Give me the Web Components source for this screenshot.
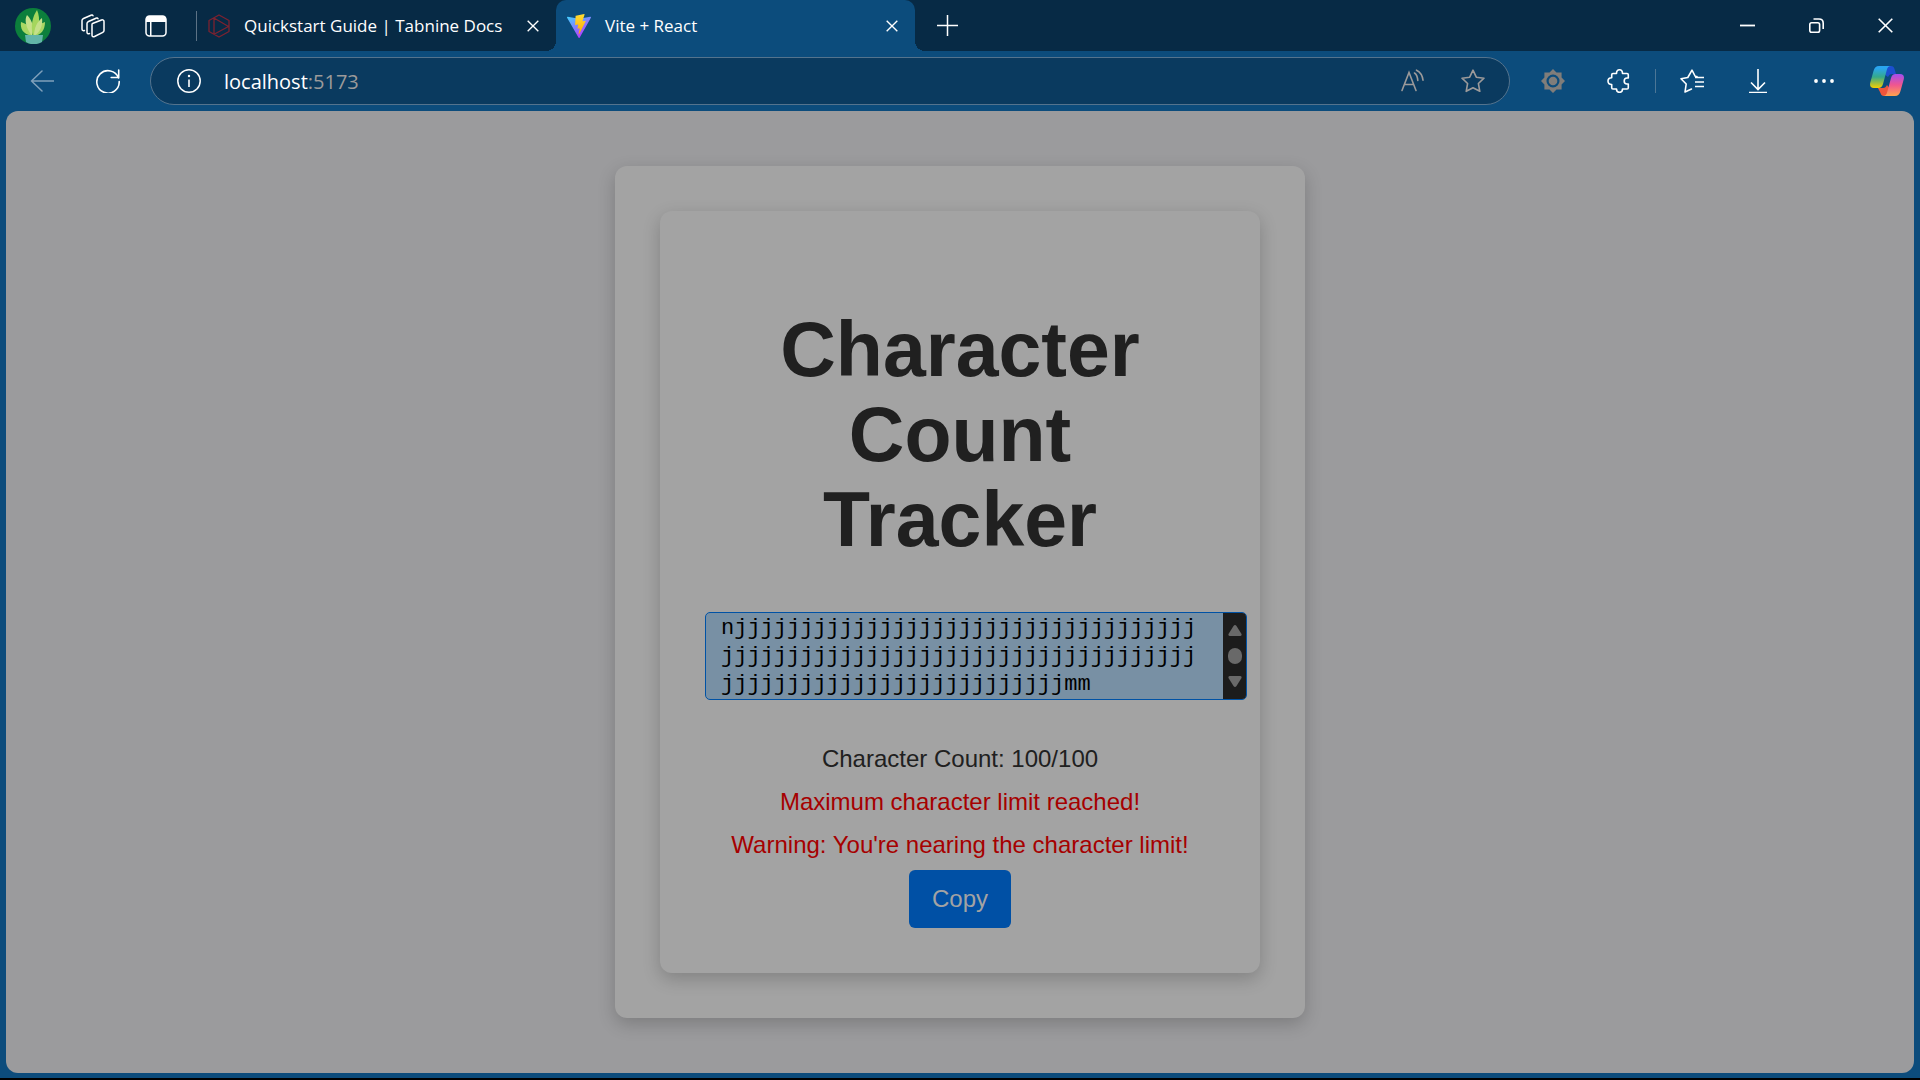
<!DOCTYPE html>
<html lang="en">
<head>
<meta charset="utf-8">
<title>Vite + React</title>
<style>
html, body { margin: 0; height: 100%; background: #000; }
body { font-family: "Open Sans", "Noto Sans", sans-serif; }
</style>
</head>
<body>
<browser-window>
  <tab-strip slot="tabs"></tab-strip>
  <tool-bar slot="toolbar"></tool-bar>
  <shadow-card>
    <shadow-card>
      <character-counter limit="100"></character-counter>
    </shadow-card>
  </shadow-card>
</browser-window>
<script>
const define = (name, html, setup) => customElements.define(name, class extends HTMLElement {
  connectedCallback() {
    if (this.shadowRoot) return;
    const t = document.createElement('template');
    t.innerHTML = html;
    this.attachShadow({ mode: 'open' }).append(t.content.cloneNode(true));
    if (setup) setup(this);
  }
});

const icons = {
  avatar: `<circle cx="18" cy="18" r="18" fill="#0c7f3c"/><g fill="#a9d764"><path d="M17 28C8 26 5 21 6 14c7 2 11 7 11 14z"/><path d="M19 28c0-7 4-12 11-14 0 8-4 13-11 14z"/><path fill="#c5e08a" d="M17 28C11 20 9 12 12 7c6 6 7 13 5 21z"/><path fill="#a5d65d" d="M18 28C15 17 18 8 22 2c4 9 2 19-4 26z"/><path fill="#c5e08a" d="M19 28c0-8 3-14 8-18 1 8-2 14-8 18z"/></g><path fill="#62b5a8" d="M10 27h18l-1 7c-5 3-12 3-16 0z"/>`,
  workspaces: `<g fill="none" stroke="#fff" stroke-width="1.5" stroke-linejoin="round" stroke-linecap="round"><path d="M11.500 9.500l9-3.500c1.300-.5 2.500.2 2.500 1.500v9c0 .8-.5 1.500-1.200 1.800l-8.300 4.200c-1.300.6-2.500 0-2.500-1.300v-10c0-.8-.2-1.500.5-1.700z"/><path d="M8.500 19.500c-1.500.6-2.500 0-2.500-1.300V9.500C6 8.500 6.500 8 7.500 7.500L15 4.200c.9-.4 1.700-.1 2 .6"/><path d="M3.500 16.500c-1.600.5-2.500-.2-2.500-1.500V6.500C1 5.500 1.500 5 2.500 4.500L10 1.200c.9-.4 1.700-.1 2 .6"/></g>`,
  panel: `<rect x="1" y="1" width="20" height="20" rx="3.500" fill="none" stroke="#fff" stroke-width="1.500"/><path fill="#fff" d="M1 7V4c0-2 1-3 3-3h14c2 0 3 1 3 3v3zM5 7h1.500v14H5z"/>`,
  tabnine: `<g fill="none" stroke="#7c2230" stroke-width="1.300" stroke-linejoin="round"><path d="M11 1l10 5.500v11L11 23 1 17.500v-11zM6 3.700v16.600M6 4l14.500 8.500L6 20.300M6 20.300V4"/></g>`,
  x12: `<path d="M.7.7l11 11M11.700.7l-11 11" stroke="#fff" stroke-width="1.400" fill="none"/>`,
  x15: `<path d="M.7.7l13.600 13.600M14.300.7L.7 14.300" stroke="#fff" stroke-width="1.600" fill="none"/>`,
  vite: `<defs><linearGradient id="a" x1="0" y1="0" x2=".6" y2="1"><stop stop-color="#41d1ff"/><stop offset="1" stop-color="#bd34fe"/></linearGradient><linearGradient id="b" x1="0" y1="0" x2="0" y2="1"><stop stop-color="#ffdd35"/><stop offset="1" stop-color="#ffa800"/></linearGradient></defs><path fill="url(#a)" d="M23.900 3.700L12.600 23.700c-.2.400-.8.400-1 0L.1 3.700c-.3-.5.100-1 .6-.9L12 4.800l11.300-2c.5-.1.900.4.600.9z"/><path fill="url(#b)" d="M17.200.1L8.900 1.700c-.2 0-.3.200-.3.300l-.5 8.700c0 .2.200.4.400.3l2.300-.5c.2 0 .4.200.4.400l-.7 3.400c0 .2.200.4.400.4l1.400-.5c.2 0 .5.200.4.400l-1.100 5.300c-.1.300.4.500.6.200l6.500-12.800c.1-.3-.1-.5-.4-.5l-2.400.5c-.2 0-.4-.2-.4-.4L17.600.5c0-.2-.2-.4-.4-.4z"/>`,
  plus: `<path d="M10.500 0v21M0 10.500h21" stroke="#fff" stroke-width="1.500"/>`,
  minimize: `<path d="M0 7.500h15" stroke="#fff" stroke-width="1.800"/>`,
  restore: `<rect x=".8" y="4.800" width="9.800" height="9.600" rx="1.800" fill="none" stroke="#fff" stroke-width="1.600"/><path d="M4.500 1h5.500c2.500 0 4.200 1.700 4.200 4.200V11" fill="none" stroke="#fff" stroke-width="1.600"/>`,
  back: `<path d="M24 12H1.500M12 2L1.500 12 12 22" fill="none" stroke="#7fa0bb" stroke-width="1.500" stroke-linecap="round" stroke-linejoin="round"/>`,
  reload: `<path d="M22.500 9A11.200 11.200 0 1 0 23.200 12.500M22.700 1v7.500h-7.500" fill="none" stroke="#fff" stroke-width="1.600" stroke-linecap="round"/>`,
  info: `<circle cx="12" cy="12" r="11.200" fill="none" stroke="#fff" stroke-width="1.500"/><path d="M12 10.500v7.500" stroke="#fff" stroke-width="1.600"/><circle cx="12" cy="7" r="1.200" fill="#fff"/>`,
  read: `<path d="M1 21.500L8 3.500l7 18M3.500 15.500h9M13.500 4c2 1.300 3 3.500 3.300 7.500M15.500 1.200c4 2 6 5.500 6.500 10" fill="none" stroke="#9c9a9a" stroke-width="1.600" stroke-linecap="round"/>`,
  star: `<path d="M12 1.200l3.300 7 7.700 1-5.600 5.300 1.400 7.800L12 18.700l-6.800 3.600 1.400-7.800L1 9.200l7.700-1z" fill="none" stroke="#9c9a9a" stroke-width="1.600" stroke-linejoin="round"/>`,
  sun: `<path fill="#807d7a" fill-rule="evenodd" d="M12 0l3.500 3.400h5.100v5.100L24 12l-3.400 3.500v5.100h-5.100L12 24l-3.500-3.400H3.400v-5.100L0 12l3.400-3.500V3.400h5.100zM12 5.500a6.500 6.500 0 1 0 0 13 6.500 6.500 0 0 0 0-13z"/><circle cx="12" cy="12" r="4.300" fill="#807d7a"/>`,
  puzzle: `<path d="M9.500 4.500c0-2.500 1-3.700 3-3.700s3 1.200 3 3.700H20c.8 0 1.300.5 1.300 1.300V9h-1.300c-1.800 0-2.800 1.200-2.800 3s1 3 2.800 3h1.300v3.700c0 .8-.5 1.300-1.300 1.300h-4.500c0 2.200-1 3.300-3 3.300s-3-1.100-3-3.300H6c-.8 0-1.300-.5-1.300-1.300V15.500C2.200 15.500 1 14.300 1 12s1.200-3.300 3.700-3.300V5.800c0-.8.500-1.300 1.300-1.300z" fill="none" stroke="#fff" stroke-width="1.600" stroke-linejoin="round"/>`,
  favorites: `<path d="M11.500 20L5 23l1.200-8L1 9.700l6.800-1.200L12 1.200l3.300 6.300H17" fill="none" stroke="#fff" stroke-width="1.600" stroke-linejoin="round" stroke-linecap="round"/><path d="M15 8.500h9M15 13h9M15 17.500h9" stroke="#fff" stroke-width="1.500"/>`,
  download: `<path d="M12 0v20M5 13.500l7 7 7-7M3 23.500h18" fill="none" stroke="#fff" stroke-width="1.600"/>`,
  more: `<g fill="#fff"><circle cx="4" cy="12" r="1.900"/><circle cx="12" cy="12" r="1.900"/><circle cx="20" cy="12" r="1.900"/></g>`,
  copilot: `<defs><linearGradient id="c" x1="0" y1="0" x2="0" y2="1"><stop offset=".1" stop-color="#2aa5f0"/><stop offset=".5" stop-color="#35a98a"/><stop offset="1" stop-color="#f5d000"/></linearGradient><linearGradient id="d" x1="0" y1="0" x2="0" y2="1"><stop stop-color="#a24df0"/><stop offset=".5" stop-color="#f0568f"/><stop offset="1" stop-color="#ffa34d"/></linearGradient></defs><path fill="#1c4fd0" d="M14 0h7c2 0 3 1 3.500 3L26 8h-4c-2 0-3 1-4 3l-4-3z"/><path fill="#f0553a" d="M8 22h5c2 0 3-1 4-3l3 4-3 7h-3c-2 0-3-1-3.500-3z"/><path fill="url(#c)" d="M9 0h12c-2.500 0-3.500 1.500-4.200 4L13 18c-.8 2.700-2.200 4-4.500 4H4c-3.500 0-4.500-2.300-3.700-5.500L3.500 5C4.500 1.500 6 0 9 0z"/><path fill="url(#d)" d="M25 30H13c2.500 0 3.500-1.500 4.200-4L21 12c.8-2.700 2.200-4 4.500-4H30c3.500 0 4.500 2.300 3.700 5.500L30.500 25c-1 3.500-2.500 5-5.500 5z"/>`
};
const icon = (name, w, h = w, vw = w, vh = h) =>
  `<svg width="${w}" height="${h}" viewBox="0 0 ${vw} ${vh}" aria-hidden="true">${icons[name]}</svg>`;
const button = (label, svg, cls = '') => `<button class="${cls}" aria-label="${label}">${svg}</button>`;

const base = `
* { box-sizing: border-box; }
button { border: 0; padding: 0; background: none; color: inherit; font: inherit; display: flex; align-items: center; justify-content: center; }
svg { display: block; flex: none; }`;

define('browser-window', `<style>
:host { display: flex; flex-direction: column; box-sizing: border-box; min-height: calc(100vh - 2px); background: #0c4c7c; }
main { flex: 1; margin: 0 6px 5px; border-radius: 12px; background: #9b9b9d; display: flex; align-items: center; justify-content: center; }
</style><slot name="tabs"></slot><slot name="toolbar"></slot><main><slot></slot></main>`);

define('tab-strip', `<style>${base}
:host { display: flex; align-items: stretch; height: 51px; background: #072a45; color: #fff; font-size: 17px; }
.lead { display: flex; align-items: center; padding-left: 15px; }
.lead button { padding-right: 30px; }
.lead button + button { padding-right: 40px; }
.lead button:last-child { padding-right: 29px; }
.rule { width: 1px; height: 30px; align-self: center; background: #5c7285; }
.spacer { flex: 1; }
.add { width: 64px; }
.win { width: 69px; }
</style>
<div class="lead">${button('Profile', icon('avatar', 36))}${button('Workspaces', icon('workspaces', 24))}${button('Tab actions', icon('panel', 22))}</div>
<span class="rule"></span>
<browser-tab>${icon('tabnine', 22, 24).replace('<svg', '<svg slot="icon"')}Quickstart Guide | Tabnine Docs</browser-tab>
<browser-tab active>${icon('vite', 24).replace('<svg', '<svg slot="icon"')}Vite + React</browser-tab>
${button('New tab', icon('plus', 21), 'add')}
<span class="spacer"></span>
${button('Minimize', icon('minimize', 15), 'win')}${button('Restore', icon('restore', 15), 'win')}${button('Close', icon('x15', 15), 'win')}`);

define('browser-tab', `<style>${base}
:host { display: flex; align-items: center; box-sizing: border-box; width: 359px; padding: 0 17px 0 11px; gap: 14px; position: relative; }
:host([active]) { background: #0c4c7c; border-radius: 10px 10px 0 0; }
:host([active])::before, :host([active])::after { content: ""; position: absolute; bottom: 0; width: 10px; height: 10px; }
:host([active])::before { right: 100%; background: radial-gradient(circle at 0 0, #072a45 10px, #0c4c7c 10px); }
:host([active])::after { left: 100%; background: radial-gradient(circle at 100% 0, #072a45 10px, #0c4c7c 10px); }
span { flex: 1; white-space: nowrap; }
</style><slot name="icon"></slot><span><slot></slot></span>${button('Close tab', icon('x12', 12, 12, 12.4, 12.4))}`);

define('tool-bar', `<style>${base}
:host { display: flex; align-items: center; height: 60px; padding: 0 3px 0 9px; color: #fff; }
button { width: 66px; height: 48px; }
.address { flex: 1; display: flex; align-items: center; height: 48px; margin: 0 10px 0 9px; padding-left: 26px; border: 1px solid #54738d; border-radius: 24px; background: #0a3a5f; font-size: 20px; }
.url { flex: 1; margin-left: 23px; color: #9c9a9a; }
.url b { font-weight: 400; color: #fff; }
.address button { width: 60px; }
.address button:last-child { margin-right: 6px; }
.rule { width: 1px; height: 24px; margin: 0 3px; background: #4c7696; }
button.last { width: 60px; }
</style>
${button('Back', icon('back', 24))}${button('Refresh', icon('reload', 24))}
<div class="address">${icon('info', 24)}<span class="url"><b>localhost</b>:5173</span>${button('Read aloud', icon('read', 24))}${button('Add to favorites', icon('star', 24))}</div>
${button('Theme extension', icon('sun', 24))}${button('Extensions', icon('puzzle', 24))}<span class="rule"></span>
${button('Favorites', icon('favorites', 24))}${button('Downloads', icon('download', 24))}${button('Settings and more', icon('more', 24))}${button('Copilot', icon('copilot', 34, 30), 'last')}`);

define('shadow-card', `<style>
:host { display: block; padding: 45px; border-radius: 12px; background: #a3a3a3; box-shadow: 0 6px 18px rgba(0,0,0,.2); }
</style><slot></slot>`);

define('scroll-rail', `<style>
:host { display: flex; flex-direction: column; align-items: center; justify-content: center; gap: 12px; width: 23px; background: #1c1c1c; border-radius: 0 4px 4px 0; }
svg { display: block; }
i { width: 14px; height: 16px; border-radius: 7px; background: #696969; }
</style><svg width="14" height="11"><path fill="#696969" d="M5.500 1Q7 -1 8.500 1L13.500 9Q14 11 12 11H2Q0 11 .5 9z"/></svg><i></i><svg width="14" height="11"><path fill="#696969" d="M5.500 10Q7 12 8.500 10L13.500 2Q14 0 12 0H2Q0 0 .5 2z"/></svg>`);

define('character-counter', `<style>${base}
:host { display: block; width: 510px; font-family: "Liberation Sans", Arial, sans-serif; font-size: 24px; line-height: 36px; color: #202020; text-align: center; }
h1 { margin: 51px 0 50px; font-size: 77px; line-height: 85px; font-weight: 700; }
.field { display: flex; width: 542px; height: 88px; border: 1px solid #0052a5; border-radius: 5px; background: #7890a4; }
textarea { flex: 1; min-width: 0; padding: 2px 15px 0; border: 0; outline: 0; resize: none; overflow: hidden; background: none; color: #000; font: 22px/28px "Liberation Mono", monospace; }
.notes { display: flex; flex-direction: column; align-items: center; gap: 7px; margin-top: 41px; }
p { margin: 0; }
.alert { color: #a60000; }
.copy { width: 102px; height: 58px; border-radius: 6px; background: #0050a5; color: #a3a3a3; }
</style>
<h1>Character Count Tracker</h1>
<div class="field"><textarea aria-label="Text to count"></textarea><scroll-rail></scroll-rail></div>
<div class="notes"><p class="count"></p><p class="alert">Maximum character limit reached!</p><p class="alert">Warning: You're nearing the character limit!</p><button class="copy">Copy</button></div>`,
host => {
  const area = host.shadowRoot.querySelector('textarea');
  const limit = Number(host.getAttribute('limit'));
  area.maxLength = limit;
  area.value = 'n' + 'j'.repeat(97) + 'mm';
  const update = () => {
    host.shadowRoot.querySelector('.count').textContent = `Character Count: ${area.value.length}/${limit}`;
  };
  area.addEventListener('input', update);
  update();
});
</script>
</body>
</html>
